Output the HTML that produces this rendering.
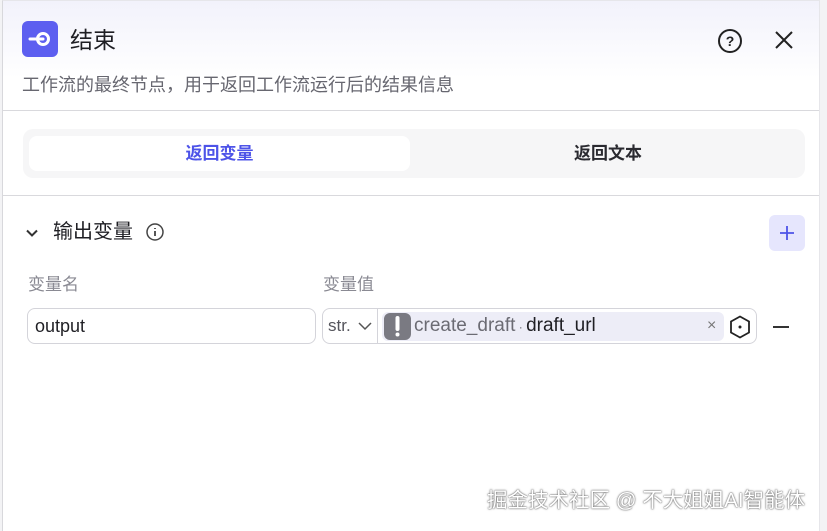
<!DOCTYPE html>
<html><head><meta charset="utf-8"><style>
*{box-sizing:border-box;margin:0;padding:0}
body{width:827px;height:531px;overflow:hidden;background:#f3f3f5;font-family:"Liberation Sans","Noto Sans CJK SC",sans-serif;position:relative}
.panel{position:absolute;left:2px;top:0;width:818px;height:531px;background:#fff;border-left:1px solid #d8d8dc;border-top:1px solid #e6e6ea;border-right:1px solid #e6e6ea}
.hdr{position:absolute;left:0;top:0;width:100%;height:110px;background:linear-gradient(#f2f2fb,#fff 70%)}
.abs{position:absolute}
.line{position:absolute;left:0;width:100%;height:1px;background:#d9d9dd}
.inp{position:absolute;height:36px;border:1px solid #d4d4da;border-radius:8px;background:#fff}
</style></head><body>
<div class="panel">
<div class="hdr"></div>
<div class="abs" style="left:19px;top:20px;width:36px;height:36px;background:#5d5ff0;border-radius:6px">
<svg width="36" height="36" viewBox="0 0 36 36"><circle cx="21" cy="18" r="5.5" fill="none" stroke="#fff" stroke-width="3"/><path d="M8 18h13" stroke="#fff" stroke-width="3" stroke-linecap="round"/></svg></div>
<div class="abs" style="left:67px;top:24px;font-size:23px;color:#1f1f24;line-height:30px">结束</div>
<svg class="abs" style="left:713px;top:26px" width="28" height="28" viewBox="0 0 28 28"><circle cx="14" cy="14" r="11" fill="none" stroke="#222" stroke-width="2"/><text x="14" y="19" text-anchor="middle" font-size="14" font-weight="bold" fill="#222" font-family="Liberation Sans">?</text></svg>
<svg class="abs" style="left:770px;top:28px" width="22" height="22" viewBox="0 0 22 22"><path d="M3 3l16 16M19 3L3 19" stroke="#222" stroke-width="2"/></svg>
<div class="abs" style="left:19px;top:72px;font-size:18px;color:#676770;line-height:24px;white-space:nowrap">工作流的最终节点，用于返回工作流运行后的结果信息</div>
<div class="line" style="top:109px"></div>
<div class="abs" style="left:20px;top:128px;width:782px;height:49px;background:#f6f6f7;border-radius:10px"></div>
<div class="abs" style="left:26px;top:135px;width:381px;height:35px;background:#fff;border-radius:8px;text-align:center;line-height:35px;font-size:17px;color:#4d53e8;font-weight:bold">返回变量</div>
<div class="abs" style="left:410px;top:135px;width:390px;height:35px;text-align:center;line-height:35px;font-size:17px;color:#2a2a30;font-weight:bold">返回文本</div>
<div class="line" style="top:194px"></div>
<svg class="abs" style="left:21px;top:224px" width="16" height="16" viewBox="0 0 16 16"><path d="M3 5.5l5 5 5-5" fill="none" stroke="#333" stroke-width="2"/></svg>
<div class="abs" style="left:50px;top:217px;font-size:20px;color:#1f1f24;line-height:28px">输出变量</div>
<svg class="abs" style="left:142px;top:221px" width="20" height="20" viewBox="0 0 20 20"><circle cx="10" cy="10" r="8" fill="none" stroke="#444" stroke-width="1.5"/><path d="M10 9v5M10 6v1" stroke="#444" stroke-width="1.8"/></svg>
<div class="abs" style="left:766px;top:214px;width:36px;height:36px;background:#e6e6fd;border-radius:6px"><svg width="36" height="36"><path d="M18 11v14M11 18h14" stroke="#4d53e8" stroke-width="1.8"/></svg></div>
<div class="abs" style="left:25px;top:269px;font-size:17px;color:#8a8a93">变量名</div>
<div class="abs" style="left:320px;top:269px;font-size:17px;color:#8a8a93">变量值</div>
<div class="inp" style="left:24px;top:307px;width:289px;padding-left:7px;line-height:34px;font-size:18px;color:#1f1f24">output</div>
<div class="inp" style="left:319px;top:307px;width:435px"></div>
<div class="abs" style="left:325px;top:308px;line-height:34px;font-size:17px;color:#55555c">str.</div>
<svg class="abs" style="left:355px;top:319px" width="14" height="12"><path d="M1 3l6 6 6-6" fill="none" stroke="#555" stroke-width="1.5"/></svg>
<div class="abs" style="left:374px;top:308px;width:1px;height:34px;background:#d4d4da"></div>
<div class="abs" style="left:379px;top:311px;width:342px;height:29px;background:#ededf7;border-radius:6px"></div>
<div class="abs" style="left:381px;top:312px;width:27px;height:27px;background:#7a7a82;border-radius:6px"><svg width="27" height="27"><path d="M13.5 5v11" stroke="#fff" stroke-width="4" stroke-linecap="round"/><circle cx="13.5" cy="21.5" r="2" fill="#fff"/></svg></div>
<div class="abs" style="left:411px;top:310px;line-height:30px;font-size:19px;color:#6b6b73;white-space:nowrap">create_draft<span style="font-size:12px"> · </span><span style="color:#1f1f24">draft_url</span></div>
<div class="abs" style="left:704px;top:312px;font-size:16px;color:#777;line-height:26px">×</div>
<svg class="abs" style="left:724px;top:312px" width="26" height="28" viewBox="0 0 26 28"><path d="M13 3.5l9 5v11l-9 5-9-5v-11z" fill="none" stroke="#222" stroke-width="1.8"/><circle cx="13" cy="14" r="1.5" fill="#222"/></svg>
<div class="abs" style="left:770px;top:325px;width:16px;height:2px;background:#333"></div>
</div>
<div class="abs" style="left:487px;top:487px;font-size:20.5px;color:#fff;line-height:28px;white-space:nowrap;text-shadow:0 0 2px #666,0 0 1px #444">掘金技术社区 @ 不大姐姐AI智能体</div>
</body></html>
